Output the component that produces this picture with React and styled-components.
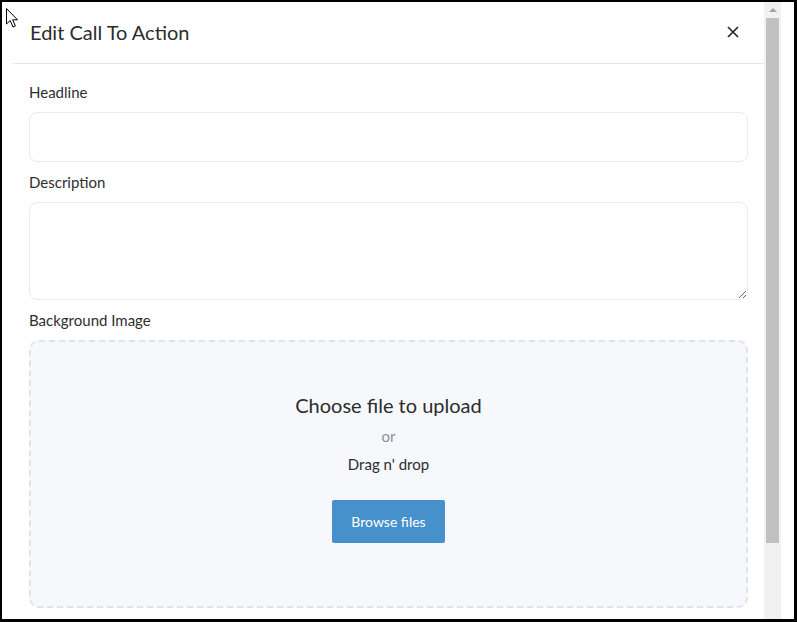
import styled, { createGlobalStyle } from 'styled-components';

const GlobalStyle = createGlobalStyle`
  html, body {
    margin: 0;
    background: #000;
  }
  * {
    box-sizing: border-box;
  }
`;

const Frame = styled.div`
  height: 622px;
  padding: 2px 3px 3px 2px;
  display: flex;
  background: #000;
`;

const Screen = styled.div`
  flex: 1;
  display: flex;
  background: #fff;
  padding-right: 13px;
  overflow: hidden;
  position: relative;
  font-family: Lato, "Open Sans", sans-serif;
  color: #2e2e2e;
`;

const Modal = styled.div`
  flex: 1;
  margin-left: 11px;
  display: flex;
  flex-direction: column;
`;

const Header = styled.div`
  height: 62px;
  border-bottom: 1px solid #e6e6ee;
  display: flex;
  align-items: center;
  justify-content: space-between;
  padding: 0 19px 2px 17px;
`;

const Title = styled.h2`
  margin: 0;
  font-size: 20px;
  font-weight: 400;
  color: #2c2c2c;
`;

const CloseButton = styled.button`
  width: 24px;
  height: 24px;
  border: none;
  background: none;
  padding: 0;
  display: flex;
  align-items: center;
  justify-content: center;
  cursor: pointer;
`;

const Body = styled.div`
  padding: 17px 16px 0;
  display: flex;
  flex-direction: column;
`;

const Label = styled.label`
  display: block;
  font-size: 15px;
  line-height: 22px;
  margin-bottom: 9px;
  color: #2e2e2e;
`;

const Field = styled.div`
  margin-bottom: 9px;
`;

const Input = styled.input`
  display: block;
  width: 100%;
  height: 50px;
  border: 1px solid #ebebef;
  border-radius: 8px;
  padding: 0 14px;
  font: inherit;
  outline: none;
`;

const TextArea = styled.textarea`
  display: block;
  width: 100%;
  height: 98px;
  border: 1px solid #ebebef;
  border-radius: 8px;
  padding: 10px 14px;
  font: inherit;
  outline: none;
  resize: vertical;
`;

const DropZone = styled.div`
  height: 268px;
  border: 2px dashed #e1e3ec;
  border-radius: 10px;
  background: #f7f8fc;
  display: flex;
  flex-direction: column;
  align-items: center;
  padding-top: 49px;
`;

const DropTitle = styled.div`
  font-size: 20px;
  line-height: 28px;
  color: #2c2c2c;
`;

const DropOr = styled.div`
  font-size: 15px;
  line-height: 22px;
  margin-top: 6px;
  color: #8a909e;
`;

const DropHint = styled.div`
  font-size: 15px;
  line-height: 22px;
  margin-top: 6px;
  color: #2c2c2c;
`;

const BrowseButton = styled.button`
  margin-top: 25px;
  height: 43px;
  padding: 0 19px;
  border: none;
  border-radius: 2px;
  background: #4690cc;
  color: #fff;
  font-family: Lato, "Open Sans", sans-serif;
  font-size: 14px;
  cursor: pointer;
`;

const Scrollbar = styled.div`
  width: 17px;
  background: #f1f1f1;
  display: flex;
  flex-direction: column;
  align-items: center;
  padding-top: 6px;
`;

const Arrow = styled.div`
  width: 0;
  height: 0;
  border-left: 4px solid transparent;
  border-right: 4px solid transparent;
  border-bottom: 4px solid #a3a3a3;
`;

const Thumb = styled.div`
  width: 13px;
  height: 525px;
  margin-top: 6px;
  background: #c1c1c1;
`;

const Cursor = styled.svg`
  position: absolute;
  left: 3px;
  top: 5px;
`;

export default function App() {
  return (
    <>
      <GlobalStyle />
      <Frame>
        <Screen>
          <Modal>
            <Header>
              <Title>Edit Call To Action</Title>
              <CloseButton aria-label="Close">
                <svg width="12" height="12" viewBox="0 0 12 12">
                  <path d="M1 1 L11 11 M11 1 L1 11" stroke="#222" strokeWidth="1.6" />
                </svg>
              </CloseButton>
            </Header>
            <Body>
              <Field>
                <Label>Headline</Label>
                <Input type="text" />
              </Field>
              <Field>
                <Label>Description</Label>
                <TextArea />
              </Field>
              <Field>
                <Label>Background Image</Label>
                <DropZone>
                  <DropTitle>Choose file to upload</DropTitle>
                  <DropOr>or</DropOr>
                  <DropHint>Drag n' drop</DropHint>
                  <BrowseButton>Browse files</BrowseButton>
                </DropZone>
              </Field>
            </Body>
          </Modal>
          <Scrollbar>
            <Arrow />
            <Thumb />
          </Scrollbar>
          <Cursor width="14" height="22" viewBox="0 0 14 22">
            <path
              d="M1.5 1.5 L1.5 17 L5.2 13.6 L8 20 L10.4 19 L7.7 12.8 L12.5 12.8 Z"
              fill="#fff"
              stroke="#000"
              strokeWidth="1"
              strokeLinejoin="miter"
            />
          </Cursor>
        </Screen>
      </Frame>
    </>
  );
}
